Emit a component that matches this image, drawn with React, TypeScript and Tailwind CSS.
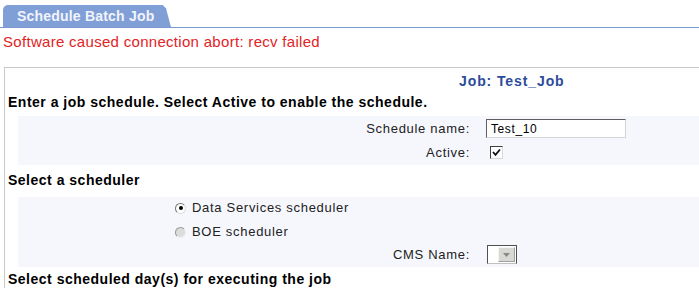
export default function App() {
  return (
    <div className="w-[699px] h-[288px] overflow-hidden bg-white font-['Liberation_Sans',Arial,sans-serif] text-black">
      {/* tab strip */}
      <div className="flex items-end pt-[5px] pl-[3px] border-b border-[#7d9bd3] h-[28px]">
        <div className="h-[22px] w-[168px] bg-[#819fd7] rounded-tl-[5px] [clip-path:polygon(0_0,95%_0,97%_15%,100%_100%,0_100%)] flex items-center pl-[14px] text-[14px] font-bold tracking-[0.2px] text-[#f1f4fb]">
          Schedule Batch Job
        </div>
      </div>

      {/* error message */}
      <div className="pl-[3px] pt-[6px] h-[22px] leading-[16px] text-[15px] tracking-[0.3px] text-[#e2231f]">
        Software caused connection abort: recv failed
      </div>

      {/* main form box */}
      <div className="mt-[17px] ml-[4px] w-[960px] border-l border-t border-[#c9c9c9] pb-[20px]">
        <div className="h-[24px] pt-[5px] pl-[454px] leading-[16px] text-[14px] font-bold text-[#2c4c9c] tracking-[0.9px]">
          Job: Test_Job
        </div>
        <div className="h-[23px] pl-[3px] leading-[16px] pt-[2px] text-[14px] font-bold tracking-[0.5px]">
          Enter a job schedule. Select Active to enable the schedule.
        </div>

        <div className="ml-[13px] mt-[1px] h-[49px] bg-[#f6f7fd] grid grid-cols-[452px_1fr] gap-x-[16px] text-[13px] tracking-[0.7px] text-[#222]">
          <div className="h-[25px] flex items-center justify-end pt-[1px]">Schedule name:</div>
          <div className="h-[25px] flex items-center">
            <div className="w-[140px] h-[19px] border border-t-[#606060] border-l-[#606060] border-r-[#d4d4d4] border-b-[#d4d4d4] bg-white flex items-center pl-[4px] text-[12px] text-black tracking-[0.6px]">
              Test_10
            </div>
          </div>
          <div className="h-[22px] flex items-center justify-end -mt-[1px]">Active:</div>
          <div className="h-[22px] flex items-center pl-[4px] -mt-[1px]">
            <div className="w-[13px] h-[13px] border border-t-[#404040] border-l-[#404040] border-r-[#d8d8d8] border-b-[#d8d8d8] bg-white flex items-center justify-center">
              <svg width="9" height="9" viewBox="0 0 9 9">
                <path d="M1 4 L3.5 6.8 L8 1.5" fill="none" stroke="#111" strokeWidth="1.8" />
              </svg>
            </div>
          </div>
        </div>

        <div className="h-[32px] pl-[3px] pt-[7px] leading-[16px] text-[14px] font-bold tracking-[0.5px]">
          Select a scheduler
        </div>

        <div className="ml-[13px] h-[70px] bg-[#f6f7fd] text-[13px] tracking-[0.7px] text-[#222]">
          <div className="pl-[157px] flex flex-col">
            <label className="h-[22px] flex items-center gap-[6px]">
              <span className="w-[11px] h-[11px] rounded-full border border-t-[#777] border-l-[#777] border-r-[#ddd] border-b-[#ddd] bg-white flex items-center justify-center">
                <span className="w-[4px] h-[4px] rounded-full bg-black" />
              </span>
              Data Services scheduler
            </label>
            <label className="h-[26px] flex items-center gap-[6px]">
              <span className="w-[11px] h-[11px] rounded-full border border-t-[#999] border-l-[#999] border-r-[#eee] border-b-[#eee] bg-[#dcdcdc]" />
              BOE scheduler
            </label>
          </div>
          <div className="grid grid-cols-[452px_1fr] gap-x-[16px]">
            <div className="h-[20px] flex items-center justify-end">CMS Name:</div>
            <div className="h-[20px] flex items-start pl-[1px]">
              <div className="w-[30px] h-[19px] border border-t-[#505050] border-l-[#505050] border-r-[#505050] border-b-[#c0c0c0] bg-white flex justify-end p-[1px]">
                <div className="w-[17px] h-full bg-[#d8d8d4] border border-t-[#f4f4f4] border-l-[#f4f4f4] border-r-[#a0a0a0] border-b-[#a0a0a0] flex items-center justify-center">
                  <svg width="7" height="4" viewBox="0 0 7 4">
                    <path d="M0 0 L7 0 L3.5 4 Z" fill="#888" />
                  </svg>
                </div>
              </div>
            </div>
          </div>
        </div>

        <div className="h-[24px] pl-[3px] pt-[4px] leading-[16px] text-[14px] font-bold tracking-[0.5px]">
          Select scheduled day(s) for executing the job
        </div>
      </div>
    </div>
  );
}
